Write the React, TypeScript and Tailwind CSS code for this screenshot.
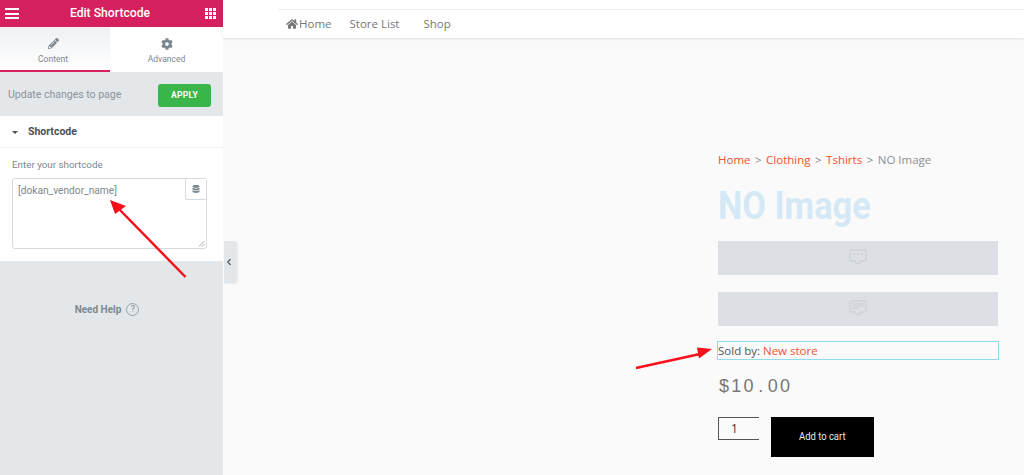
import { ChevronLeft } from 'lucide-react';
import { FaDatabase, FaHome, FaPencilAlt, FaCog } from 'react-icons/fa';

function GridIcon() {
  return (
    <div className="grid grid-cols-3 gap-[1.500px] w-[11px]">
      {[0, 1, 2, 3, 4, 5, 6, 7, 8].map((i) => (
        <div key={i} className="w-[2.600px] h-[2.600px] bg-white" />
      ))}
    </div>
  );
}

function BurgerIcon() {
  return (
    <div className="flex flex-col gap-[2.500px] w-[14px]">
      <div className="h-[2px] bg-white" />
      <div className="h-[2px] bg-white" />
      <div className="h-[2px] bg-white" />
    </div>
  );
}

function ChatIcon({ lines }: { lines?: boolean }) {
  return (
    <svg width="18" height="18" viewBox="0 0 18 18" fill="none" stroke="#cdd1d5" strokeWidth="1.300">
      <path d="M2.500 1h13a1.500 1.500 0 0 1 1.500 1.500v8a1.500 1.500 0 0 1-1.500 1.500h-4l-.5 2.500h-4l-.5-2.500h-4a1.500 1.500 0 0 1-1.500-1.500v-8a1.500 1.500 0 0 1 1.500-1.500z" />
      {lines ? (
        <path d="M3.500 4h11M3.500 6.200h11M3.500 8.400h6" />
      ) : (
        <path d="M4 5h2M8 5h2M12 5h2" strokeWidth="2" />
      )}
    </svg>
  );
}

function Sidebar() {
  return (
    <aside className="w-[223px] shrink-0 min-h-[475px] bg-[#e4e7ea] font-['Roboto',sans-serif]">
      <header className="h-[27px] bg-[#d61f5e] text-white flex items-center justify-between pl-[5px] pr-[7px]">
        <BurgerIcon />
        <span className="text-[12.200px] font-medium pr-[4px]">Edit Shortcode</span>
        <GridIcon />
      </header>
      <div className="flex h-[45px] bg-white">
        <div className="w-[110px] border-b-2 border-[#d61f5e] bg-gradient-to-b from-[#eef0f2] to-white flex flex-col items-center pt-[11px] pr-[4px] text-[#7d8790]">
          <FaPencilAlt size={11} />
          <span className="text-[8.500px] mt-[5px] leading-[11px]">Content</span>
        </div>
        <div className="flex-1 flex flex-col items-center pt-[11px] text-[#7d8790]">
          <FaCog size={12} />
          <span className="text-[8.500px] mt-[4px] leading-[11px]">Advanced</span>
        </div>
      </div>
      <div className="h-[44px] flex items-center justify-between pl-2 pr-3 pt-[2px]">
        <span className="text-[10.500px] text-[#8a939b]">Update changes to page</span>
        <button className="w-[53px] h-[23px] rounded-[3px] bg-[#39b54a] text-white text-[8.500px] font-bold tracking-[0.3px]">APPLY</button>
      </div>
      <div className="bg-white">
        <div className="h-[32px] flex items-center pl-3 pt-[1px] border-b border-[#eceef0] text-[#495157]">
          <div className="w-0 h-0 border-x-[3px] border-x-transparent border-t-[3px] border-t-[#495157] mr-[10px]" />
          <span className="text-[10.500px] font-bold">Shortcode</span>
        </div>
        <div className="h-[113px] px-3 pt-[11px]">
          <div className="text-[9.800px] leading-[12px] text-[#7d8790] mb-[7px]">Enter your shortcode</div>
          <div className="relative h-[71px] w-[195px] border border-[#d5dadf] rounded-[3px] pl-[5px] pt-[4px] text-[10.200px] text-[#7d8790]">
            [dokan_vendor_name]
            <div className="absolute right-0 top-0 w-[21px] h-[21px] bg-white border-l border-b border-[#d5dadf] rounded-bl-[3px] flex items-center justify-center text-[#7d8790]">
              <FaDatabase size={8} />
            </div>
            <svg className="absolute right-[1px] bottom-[1px]" width="7" height="7" viewBox="0 0 7 7" stroke="#8a8f94" strokeWidth="0.800">
              <path d="M1 6.500L6.500 1M4 6.500L6.500 4" />
            </svg>
          </div>
        </div>
      </div>
      <div className="flex items-center justify-center gap-[5px] pt-[41px] pr-[9px] text-[#7d8790]">
        <span className="text-[10px] font-bold">Need Help</span>
        <span className="w-[13px] h-[13px] rounded-full border border-[#9aa3ab] text-[9px] leading-[11px] text-center">?</span>
      </div>
    </aside>
  );
}

function NavBar() {
  return (
    <nav className="h-[38px] bg-white pt-[9px] pl-[55px] shadow-[0_1px_2px_rgba(0,0,0,0.12)]">
      <div className="border-t border-[#eeeeee] h-[28px] flex items-center pl-[8px] text-[11.500px] text-[#777777] font-['Open_Sans',sans-serif]">
        <FaHome size={12} className="mr-[1px]" />
        <span>Home</span>
        <span className="ml-[18px]">Store List</span>
        <span className="ml-[24px]">Shop</span>
      </div>
    </nav>
  );
}

function Product() {
  return (
    <div className="w-[280px] ml-[495px] pt-[115px] font-['Open_Sans',sans-serif]">
      <div className="h-[14px] flex items-center gap-[4.500px] text-[11.500px] text-[#f0512e]">
        <span>Home</span>
        <span className="text-[#888888]">&gt;</span>
        <span>Clothing</span>
        <span className="text-[#888888]">&gt;</span>
        <span>Tshirts</span>
        <span className="text-[#888888]">&gt;</span>
        <span className="text-[#8f8f8f]">NO Image</span>
      </div>
      <h1 className="mt-[16px] h-[54px] text-[39px] leading-[46px] font-bold text-[#d4e9f5] font-['Roboto',sans-serif] origin-left scale-x-[0.88]">NO Image</h1>
      <div className="mt-[4px] h-[34px] bg-[#dce0e4] flex items-center justify-center"><ChatIcon /></div>
      <div className="mt-[17px] h-[34px] bg-[#dce0e4] flex items-center justify-center"><ChatIcon lines /></div>
      <div className="mt-[15px] -ml-[1px] w-[282px] h-[19px] border border-[#8fdcf0] flex items-center text-[11.500px] text-[#555555]">
        Sold by:&nbsp;<span className="text-[#f0512e]">New store</span>
      </div>
      <div className="mt-[15px] h-[22px] flex text-[18px] leading-[22px] text-[#777777] font-['Liberation_Sans',sans-serif]">
        {'$10.00'.split('').map((c, i) => (
          <span key={i} className="w-[12.200px] text-center">{c}</span>
        ))}
      </div>
      <div className="mt-[20px] flex gap-3 items-start">
        <div className="w-[41px] h-[23px] border-y border-l border-[#555555] pl-[12px] text-[12px] leading-[22px] text-[#333333]">1</div>
        <button className="w-[103px] h-[40px] bg-black text-[#e8e8e8] text-[11.500px] font-['Roboto',sans-serif]">
          <span className="inline-block scale-x-[0.82]">Add to cart</span>
        </button>
      </div>
    </div>
  );
}

export default function App() {
  return (
    <div className="relative flex h-[475px] w-[1024px] overflow-hidden bg-[#fafafa]">
      <Sidebar />
      <main className="flex-1 relative">
        <div className="absolute left-[1px] top-[241px] w-[13px] h-[42px] bg-[#e4e7ea] rounded-r-[3px] flex items-center justify-center pr-[3px] text-[#555d66] shadow-[1px_1px_2px_rgba(0,0,0,0.06)]">
          <ChevronLeft size={10} strokeWidth={3} />
        </div>
        <NavBar />
        <Product />
      </main>
      {/* red annotation arrows */}
      <svg className="absolute left-0 top-0 pointer-events-none" width="1024" height="475" fill="#f5101a">
        <path d="M185.500 277L118 208" stroke="#f5101a" strokeWidth="2.500" />
        <path d="M110 200L126 206L115 214Z" />
        <path d="M636 368L700 354" stroke="#f5101a" strokeWidth="2.500" />
        <path d="M712 349L697 347.500L699 358.500Z" />
      </svg>
    </div>
  );
}
